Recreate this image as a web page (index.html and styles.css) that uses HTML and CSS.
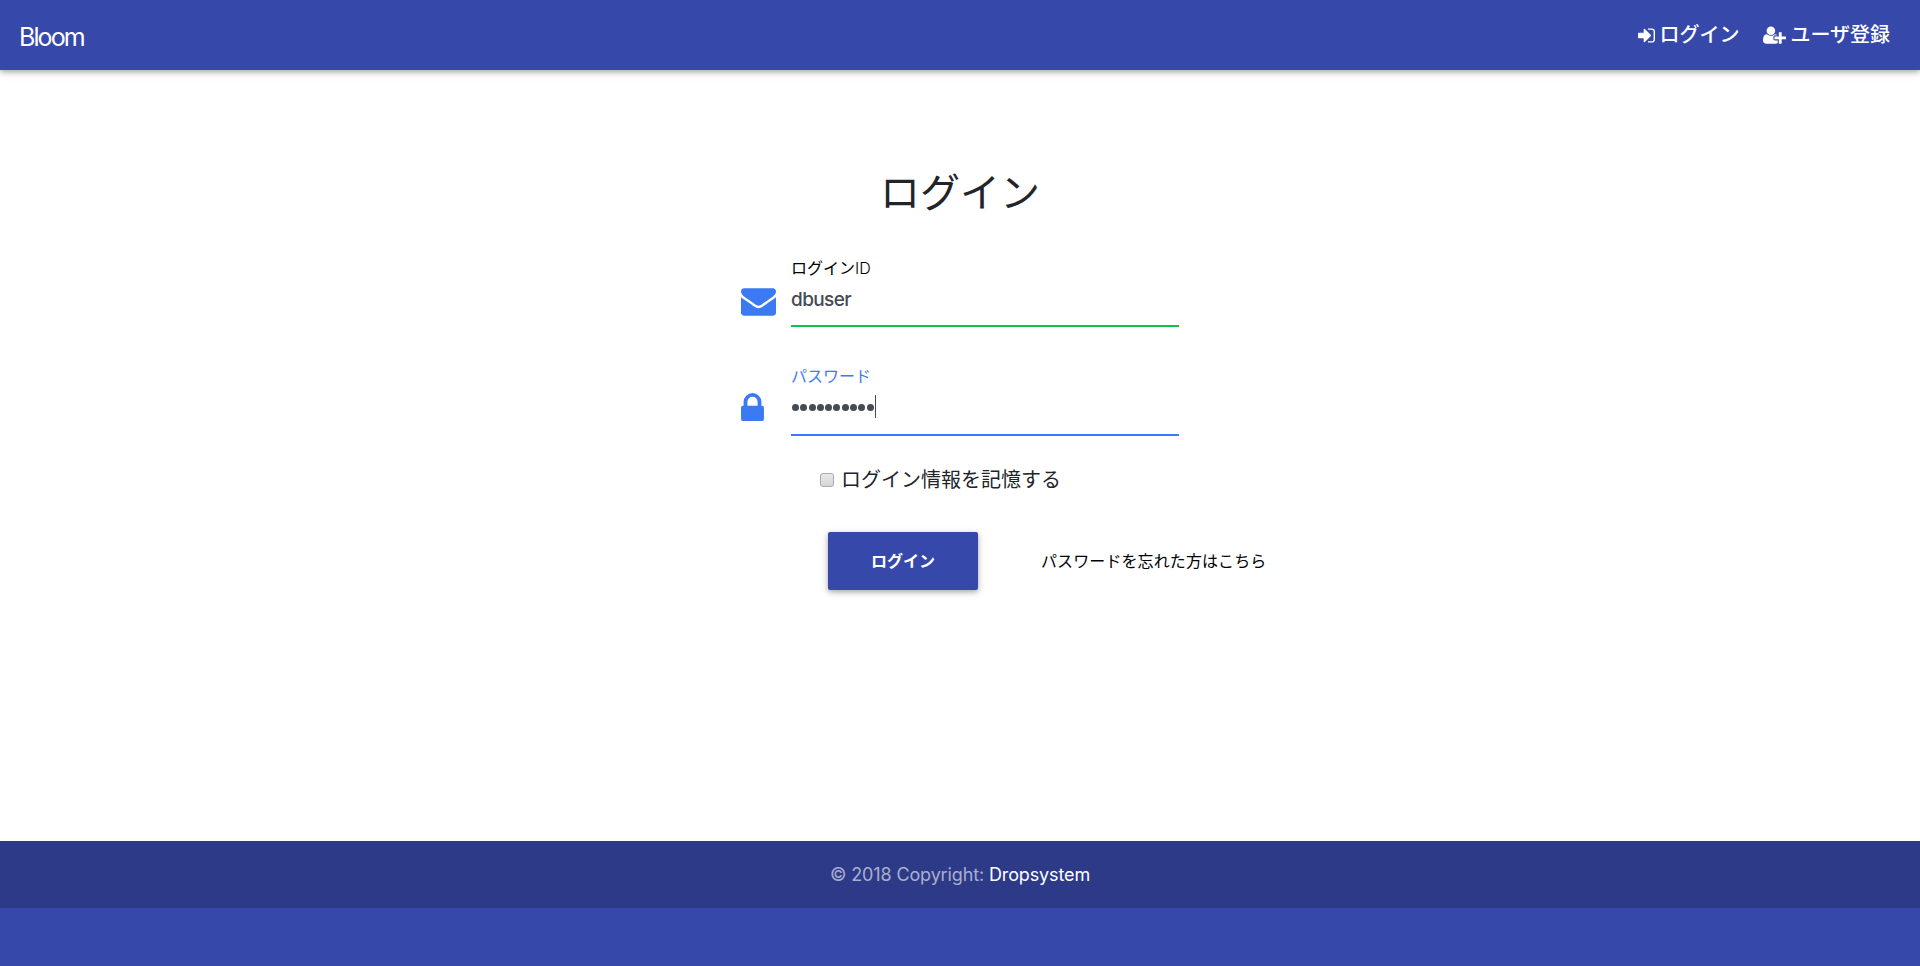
FILE: index.html
```
<!DOCTYPE html>
<html lang="ja">
<head>
<meta charset="utf-8">
<title>Bloom</title>
<link rel="stylesheet" href="styles.css">
</head>
<body>
<header class="navbar">
  <a class="brand">Bloom</a>
  <nav class="nav-links">
    <a class="nav-link"><svg class="icon-signin" viewBox="128 256 1536 1280"><path d="M1312 896q0 26-19 45l-544 544q-19 19-45 19t-45-19-19-45v-288h-448q-26 0-45-19t-19-45v-384q0-26 19-45t45-19h448v-288q0-26 19-45t45-19 45 19l544 544q19 19 19 45zm352-352v704q0 119-84.500 203.500t-203.500 84.500h-320q-13 0-22.500-9.500t-9.500-22.500q0-4-1-20t-.5-26.500 3-23.500 10-19.500 20.500-6.500h320q66 0 113-47t47-113v-704q0-66-47-113t-113-47h-312l-11.500-1-11.500-3-8-5.500-7-9-2-13.500q0-4-1-20t-.5-26.500 3-23.500 10-19.500 20.500-6.500h320q119 0 203.500 84.500t84.500 203.500z"/></svg><span>ログイン</span></a>
    <a class="nav-link"><svg class="icon-user" viewBox="0 128 2048 1536"><path d="M704 896q-159 0-271.500-112.500t-112.500-271.500 112.500-271.500 271.500-112.500 271.500 112.500 112.500 271.500-112.500 271.500-271.500 112.500zm960 128h352q13 0 22.500 9.500t9.500 22.500v192q0 13-9.500 22.500t-22.500 9.500h-352v352q0 13-9.500 22.500t-22.500 9.500h-192q-13 0-22.500-9.500t-9.500-22.500v-352h-352q-13 0-22.500-9.500t-9.500-22.500v-192q0-13 9.500-22.500t22.500-9.500h352v-352q0-13 9.500-22.500t22.500-9.500h192q13 0 22.500 9.500t9.500 22.500v352zm-736 224q0 52 38 90t90 38h256v238q-68 50-171 50h-874q-121 0-194-69t-73-190q0-53 3.500-103.500t14-109 26.500-108.500 43-97.500 62-81 85.500-53.500 111.500-20q19 0 39 17 79 61 154.500 91.500t164.500 30.500 164.500-30.500 154.500-91.500q20-17 39-17 132 0 217 96h-223q-52 0-90 38t-38 90v192z"/></svg><span>ユーザ登録</span></a>
  </nav>
</header>
<main class="content">
  <h1 class="title">ログイン</h1>
  <form class="login-form">
    <div class="field field-id">
      <svg class="icon-mail" viewBox="0 256 1792 1408"><path d="M1792 710v794q0 66-47 113t-113 47h-1472q-66 0-113-47t-47-113v-794q44 49 101 87 362 246 497 345 57 42 92.500 65.500t94.500 48 110 24.500h2q51 0 110-24.500t94.500-48 92.500-65.500q170-123 498-345 57-39 100-87zm0-294q0 79-49 151t-122 123q-376 261-468 325-10 7-42.500 31t-54 38.500-52 32.500-57.500 27-50 9h-2q-23 0-50-9t-57.500-27-52-32.500-54-38.500-42.500-31q-91-64-262-182.500t-205-142.500q-62-42-117-115.500t-55-136.500q0-78 41.500-130t118.500-52h1472q65 0 112.500 47t47.500 113z"/></svg>
      <div class="field-body valid">
        <label class="label">ログイン<span class="latin">ID</span></label>
        <div class="value">dbuser</div>
      </div>
    </div>
    <div class="field field-pw">
      <svg class="icon-lock" viewBox="0 128 1152 1408"><path d="M320 768h512v-192q0-106-75-181t-181-75-181 75-75 181v192zm832 96v576q0 40-28 68t-68 28h-960q-40 0-68-28t-28-68v-576q0-40 28-68t68-28h32v-192q0-184 132-316t316-132 316 132 132 316v192h32q40 0 68 28t28 68z"/></svg>
      <div class="field-body active">
        <label class="label">パスワード</label>
        <div class="value secret"><i class="dot"></i><i class="dot"></i><i class="dot"></i><i class="dot"></i><i class="dot"></i><i class="dot"></i><i class="dot"></i><i class="dot"></i><i class="dot"></i><i class="dot"></i><i class="caret"></i></div>
      </div>
    </div>
    <div class="remember"><span class="checkbox"></span><label>ログイン情報を記憶する</label></div>
    <div class="actions">
      <button type="button" class="submit">ログイン</button>
      <a class="forgot">パスワードを忘れた方はこちら</a>
    </div>
  </form>
</main>
<footer class="footer">
  <div class="copyright">© 2018 Copyright: <a class="owner">Dropsystem</a></div>
</footer>
</body>
</html>
```
FILE: styles.css
```
* { box-sizing: border-box; }

body {
  margin: 0;
  height: 966px;
  display: flex;
  flex-direction: column;
  overflow: hidden;
  background: #fff;
  color: #212529;
  font-family: Inter, "Noto Sans CJK JP", sans-serif;
}

svg { display: block; flex: none; fill: currentColor; }

.navbar {
  flex: none;
  height: 70px;
  padding: 0 30px 0 19px;
  display: flex;
  align-items: center;
  justify-content: space-between;
  background: #3649ab;
  color: #fff;
  box-shadow: 0 2px 5px rgba(0, 0, 0, .26), 0 2px 10px rgba(0, 0, 0, .12);
}

.brand {
  padding-top: 3px;
  font-size: 25px;
  line-height: 30px;
  font-weight: 400;
  letter-spacing: -1.9px;
}

.nav-links { display: flex; gap: 24px; }

.nav-link {
  display: flex;
  align-items: center;
  gap: 4px;
  font-size: 20px;
  line-height: 30px;
  font-weight: 500;
}

.icon-signin { width: 17px; height: 15px; }
.icon-user { width: 23px; height: 18px; }

.content {
  flex: none;
  height: 771px;
  padding-top: 93px;
}

.title {
  margin: 0;
  text-align: center;
  font-size: 40px;
  line-height: 60px;
  font-weight: 400;
}

.login-form {
  width: 438px;
  margin: 33px auto 0;
}

.field { display: flex; color: #3b7af2; }
.field-id { height: 110px; }
.field-pw { height: 99px; }
.icon-mail { width: 35px; height: 28px; margin: 32px 15px 0 0; }
.icon-lock { width: 23px; height: 28px; margin: 27px 27px 0 0; }

.field-body {
  width: 388px;
  height: 71px;
  border-bottom: 2px solid;
}
.field-pw .field-body { height: 70px; }
.valid { border-color: #0fc24d; }
.active { border-color: #3b7af2; }
.valid .label { color: #000; }

.label {
  display: block;
  font-size: 16px;
  line-height: 24px;
  font-weight: 400;
}
.latin { font-weight: 300; }
.active .label {
  height: 24px;
  line-height: 20px;
}

.value {
  height: 36px;
  font-size: 19px;
  line-height: 40px;
  font-weight: 500;
  letter-spacing: -.6px;
  color: #444b52;
}

.secret {
  display: flex;
  align-items: center;
  gap: 1.3px;
  padding-left: 1px;
  height: 34px;
}
.dot { width: 7px; height: 7px; border-radius: 50%; background: #444b52; }
.caret { width: 1px; height: 23px; margin-bottom: 2px; background: #444b52; }

.remember {
  display: flex;
  align-items: center;
  gap: 7px;
  height: 30px;
  margin-left: 79px;
  font-size: 20px;
  line-height: 30px;
}

.checkbox {
  width: 14px;
  height: 14px;
  border: 1px solid #a9a9a9;
  border-radius: 3px;
  background: linear-gradient(#e8e8e8, #d6d6d6);
}

.actions {
  display: flex;
  align-items: center;
  margin: 37px 0 0 87px;
  white-space: nowrap;
}

.submit {
  flex: none;
  width: 150px;
  height: 58px;
  padding: 0;
  border: 0;
  border-radius: 2px;
  background: #3649ab;
  color: #fff;
  font: 700 16px/24px Inter, "Noto Sans CJK JP", sans-serif;
  box-shadow: 0 2px 5px rgba(0, 0, 0, .26), 0 2px 10px rgba(0, 0, 0, .12);
}

.forgot {
  margin-left: 63px;
  padding-bottom: 1px;
  font-size: 16px;
  line-height: 24px;
  letter-spacing: .1px;
  color: #000;
}

.footer {
  flex: 1;
  background: #3649ab;
}

.copyright {
  height: 67px;
  background: #2c3a88;
  color: rgba(255, 255, 255, .6);
  text-align: center;
  font-size: 18px;
  line-height: 67px;
  letter-spacing: -.13px;
}

.owner { color: #fff; }
```
